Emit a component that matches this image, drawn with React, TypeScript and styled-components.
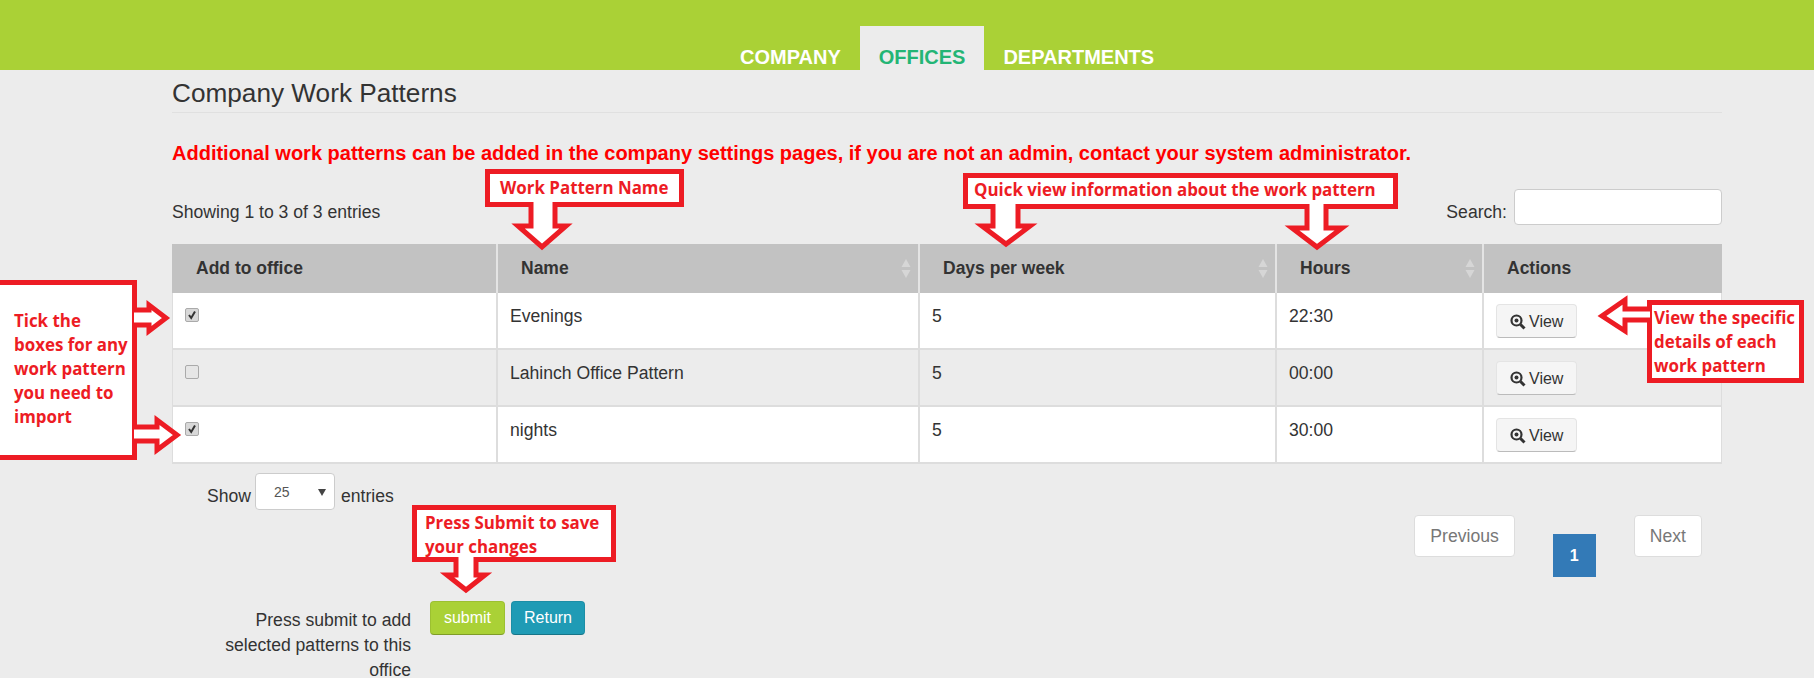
import React from "react";
import styled, { createGlobalStyle } from "styled-components";

const RED = "#ed1c24";

const GlobalStyle = createGlobalStyle`
  html, body {
    margin: 0;
    padding: 0;
    background: #ececec;
    overflow: hidden;
    height: 678px;
  }
  body {
    font-family: "Liberation Sans", Arial, sans-serif;
    font-size: 17.6px;
    color: #333;
  }
  * { box-sizing: border-box; }
`;

const Page = styled.div`
  position: relative;
  width: 1814px;
  height: 678px;
  overflow: hidden;
`;

const TopBar = styled.header`
  height: 70px;
  background: #aad136;
  display: flex;
  align-items: flex-end;
  padding-left: 721px;
`;

const NavTab = styled.a<{ $active?: boolean }>`
  height: 44px;
  padding: 21px 19px 0;
  font-size: 20px;
  line-height: 20px;
  font-weight: bold;
  color: ${(p) => (p.$active ? "#23b575" : "#fff")};
  background: ${(p) => (p.$active ? "#ececec" : "transparent")};
`;

const Main = styled.main`
  width: 1550px;
  margin-left: 172px;
`;

const Title = styled.h1`
  margin: 0;
  height: 43px;
  padding-top: 8px;
  font-size: 26.2px;
  line-height: 30px;
  font-weight: normal;
  border-bottom: 1px solid #e0e0e0;
`;

const Notice = styled.p`
  margin: 27px 0 0;
  font-size: 20px;
  line-height: 26px;
  font-weight: bold;
  color: #f00;
`;

const TableTop = styled.div`
  display: flex;
  justify-content: space-between;
  align-items: flex-start;
  margin-top: 23px;
  height: 55px;
`;

const Info = styled.div`
  padding-top: 12px;
  line-height: 22px;
`;

const SearchLabel = styled.label`
  display: flex;
  gap: 7px;
  line-height: 22px;
`;

const SearchText = styled.span`
  padding-top: 12px;
`;

const SearchInput = styled.input`
  width: 208px;
  height: 36px;
  background: #fff;
  border: 1px solid #ccc;
  border-radius: 4px;
`;

const Table = styled.table`
  width: 1550px;
  table-layout: fixed;
  border-collapse: separate;
  border-spacing: 0;
`;

const Th = styled.th`
  position: relative;
  height: 49px;
  padding: 0 24px 0 23px;
  background: #c2c2c2;
  border-right: 2px solid #e4e4e4;
  text-align: left;
  font-size: 17.5px;
  font-weight: bold;
  &:first-child { padding-left: 24px; }
  &:last-child { border-right: 0; }
`;

const SortIcon = styled.svg`
  position: absolute;
  right: 7px;
  top: 15px;
`;

const Row = styled.tr<{ $striped?: boolean }>`
  background: ${(p) => (p.$striped ? "#ececec" : "#fff")};
`;

const Td = styled.td`
  height: 57px;
  padding: 12px 12px 0;
  vertical-align: top;
  line-height: 22px;
  border-right: 2px solid #ddd;
  border-bottom: 2px solid #ddd;
  &:first-child { border-left: 1px solid #ddd; }
  &:last-child { border-right: 1px solid #ddd; padding: 11px 12px 0; }
`;

const CheckBox = styled.span<{ $on?: boolean }>`
  display: flex;
  align-items: center;
  justify-content: center;
  width: 14px;
  height: 14px;
  margin-top: 3px;
  background: ${(p) => (p.$on ? "#d8d8d8" : "#e6e6e6")};
  border: 1px solid #aaa;
  border-radius: 2px;
`;

const ViewButton = styled.button`
  display: flex;
  align-items: center;
  gap: 3px;
  width: 81px;
  height: 34px;
  padding: 1px 0 0 13px;
  background: #f5f5f5;
  border: 1px solid #e4e4e4;
  border-bottom: 1px solid #bbb;
  border-radius: 4px;
  font: 16px "Liberation Sans", Arial, sans-serif;
  color: #333;
`;

const LengthRow = styled.div`
  display: flex;
  align-items: flex-start;
  gap: 4px;
  height: 37px;
  margin-top: 9px;
  padding-left: 35px;
  line-height: 22px;
`;

const LengthText = styled.span`
  padding-top: 12px;
`;

const SelectBox = styled.div`
  position: relative;
  width: 80px;
  height: 37px;
  margin-right: 2px;
  padding: 8px 0 0 18px;
  background: #fff;
  border: 1px solid #ccc;
  border-radius: 4px;
  font-size: 14px;
  line-height: 20px;
  color: #555;
`;

const SelectCaret = styled.span`
  position: absolute;
  right: 8px;
  top: 15px;
  border-left: 4px solid transparent;
  border-right: 4px solid transparent;
  border-top: 7px solid #444;
`;

const Pager = styled.nav`
  display: flex;
  justify-content: flex-end;
  align-items: flex-start;
  gap: 38px;
  height: 62px;
  margin-top: 5px;
  padding-right: 20px;
`;

const PageLink = styled.a`
  height: 42px;
  padding: 0 15px;
  line-height: 40px;
  color: #777;
  background: #fff;
  border: 1px solid #ddd;
  border-radius: 4px;
`;

const PageCurrent = styled.a`
  width: 43px;
  height: 43px;
  margin-top: 19px;
  text-align: center;
  line-height: 43px;
  font-size: 16px;
  font-weight: bold;
  color: #fff;
  background: #337ab7;
`;

const FormRow = styled.div`
  display: flex;
  align-items: flex-start;
  margin-top: 24px;
`;

const FormHint = styled.div`
  width: 239px;
  padding-top: 7px;
  text-align: right;
  line-height: 25px;
`;

const FormButton = styled.button<{ $color: string }>`
  height: 34px;
  padding: 0;
  color: #fff;
  background: ${(p) => p.$color};
  border: 1px solid rgba(0, 0, 0, 0.08);
  border-bottom: 1px solid rgba(0, 0, 0, 0.25);
  border-radius: 4px;
  font: 16px "Liberation Sans", Arial, sans-serif;
`;

const SubmitButton = styled(FormButton)`
  width: 75px;
  margin-left: 19px;
`;

const ReturnButton = styled(FormButton)`
  width: 74px;
  margin-left: 6px;
`;

const Note = styled.div<{ $x: number; $y: number; $w: number; $h: number; $px: number; $py: number }>`
  position: absolute;
  left: ${(p) => p.$x}px;
  top: ${(p) => p.$y}px;
  width: ${(p) => p.$w}px;
  height: ${(p) => p.$h}px;
  padding: ${(p) => p.$py}px 0 0 ${(p) => p.$px}px;
  background: #fff;
  border: 5px solid ${RED};
  font-family: "Open Sans", sans-serif;
  font-weight: 700;
  font-size: 16.9px;
  line-height: 24px;
  color: ${RED};
  white-space: pre;
`;

const ArrowLayer = styled.svg`
  position: absolute;
  left: 0;
  top: 0;
  pointer-events: none;
`;

const arrows = [
  "M531 202V226H518L542 247L566 226H555V202",
  "M993 204V226H982L1006 244L1030 226H1018V204",
  "M1307 204V228H1292L1317 247L1342 228H1326V204",
  "M134 310H149V305L166 318L149 331V325H134",
  "M134 427H157V420L177 435L157 450V441H134",
  "M456 557V575H447L466 590L485 575H476V557",
  "M1650 309H1625V300L1602 316L1625 331V320H1650",
];

const rows = [
  { name: "Evenings", days: 5, hours: "22:30", on: true },
  { name: "Lahinch Office Pattern", days: 5, hours: "00:00", on: false },
  { name: "nights", days: 5, hours: "30:00", on: true },
];

const Sort = () => (
  <SortIcon width="10" height="19" viewBox="0 0 10 19">
    <path d="M5 0L9.5 8H0.5Z M5 19L0.5 11H9.5Z" fill="#d6d6d6" />
  </SortIcon>
);

const Magnifier = () => (
  <svg width="16" height="16" viewBox="0 0 16 16">
    <circle cx="6.5" cy="6.5" r="5" fill="none" stroke="#333" strokeWidth="2.2" />
    <circle cx="6.5" cy="6.5" r="2" fill="#333" />
    <path d="M10.5 10.5L14.5 14.5" stroke="#333" strokeWidth="3" />
  </svg>
);

const Tick = () => (
  <svg width="10" height="10" viewBox="0 0 10 10">
    <path d="M2 5L4.2 8L8 1.5" fill="none" stroke="#333" strokeWidth="2" />
  </svg>
);

const App: React.FC = () => {
  return (
    <Page>
      <GlobalStyle />
      <TopBar>
        <NavTab>COMPANY</NavTab>
        <NavTab $active>OFFICES</NavTab>
        <NavTab>DEPARTMENTS</NavTab>
      </TopBar>
      <Main>
        <Title>Company Work Patterns</Title>
        <Notice>
          Additional work patterns can be added in the company settings pages, if you are not an
          admin, contact your system administrator.
        </Notice>
        <TableTop>
          <Info>Showing 1 to 3 of 3 entries</Info>
          <SearchLabel>
            <SearchText>Search:</SearchText>
            <SearchInput />
          </SearchLabel>
        </TableTop>
        <Table>
          <colgroup>
            <col width="326" />
            <col width="422" />
            <col width="357" />
            <col width="207" />
            <col width="238" />
          </colgroup>
          <thead>
            <tr>
              <Th>Add to office</Th>
              <Th>
                Name
                <Sort />
              </Th>
              <Th>
                Days per week
                <Sort />
              </Th>
              <Th>
                Hours
                <Sort />
              </Th>
              <Th>Actions</Th>
            </tr>
          </thead>
          <tbody>
            {rows.map((r, i) => (
              <Row key={r.name} $striped={i % 2 === 1}>
                <Td>
                  <CheckBox $on={r.on}>{r.on && <Tick />}</CheckBox>
                </Td>
                <Td>{r.name}</Td>
                <Td>{r.days}</Td>
                <Td>{r.hours}</Td>
                <Td>
                  <ViewButton>
                    <Magnifier />
                    View
                  </ViewButton>
                </Td>
              </Row>
            ))}
          </tbody>
        </Table>
        <LengthRow>
          <LengthText>Show</LengthText>
          <SelectBox>
            25
            <SelectCaret />
          </SelectBox>
          <LengthText>entries</LengthText>
        </LengthRow>
        <Pager>
          <PageLink>Previous</PageLink>
          <PageCurrent>1</PageCurrent>
          <PageLink>Next</PageLink>
        </Pager>
        <FormRow>
          <FormHint>
            Press submit to add
            <br />
            selected patterns to this
            <br />
            office
          </FormHint>
          <SubmitButton $color="#aad136">submit</SubmitButton>
          <ReturnButton $color="#1f9bb5">Return</ReturnButton>
        </FormRow>
      </Main>

      <Note $x={485} $y={169} $w={199} $h={38} $px={10} $py={2}>Work Pattern Name</Note>
      <Note $x={963} $y={173} $w={435} $h={36} $px={6} $py={0}>Quick view information about the work pattern</Note>
      <Note $x={-5} $y={280} $w={142} $h={180} $px={14} $py={24}>
        {"Tick the\nboxes for any\nwork pattern\nyou need to\nimport"}
      </Note>
      <Note $x={412} $y={505} $w={204} $h={57} $px={8} $py={1}>{"Press Submit to save\nyour changes"}</Note>
      <Note $x={1647} $y={300} $w={157} $h={83} $px={2} $py={1}>
        {"View the specific\ndetails of each\nwork pattern"}
      </Note>
      <ArrowLayer width="1814" height="678" viewBox="0 0 1814 678">
        {arrows.map((d) => (
          <path key={d} d={d} fill="#fff" stroke={RED} strokeWidth="5" />
        ))}
      </ArrowLayer>
    </Page>
  );
};

export default App;
